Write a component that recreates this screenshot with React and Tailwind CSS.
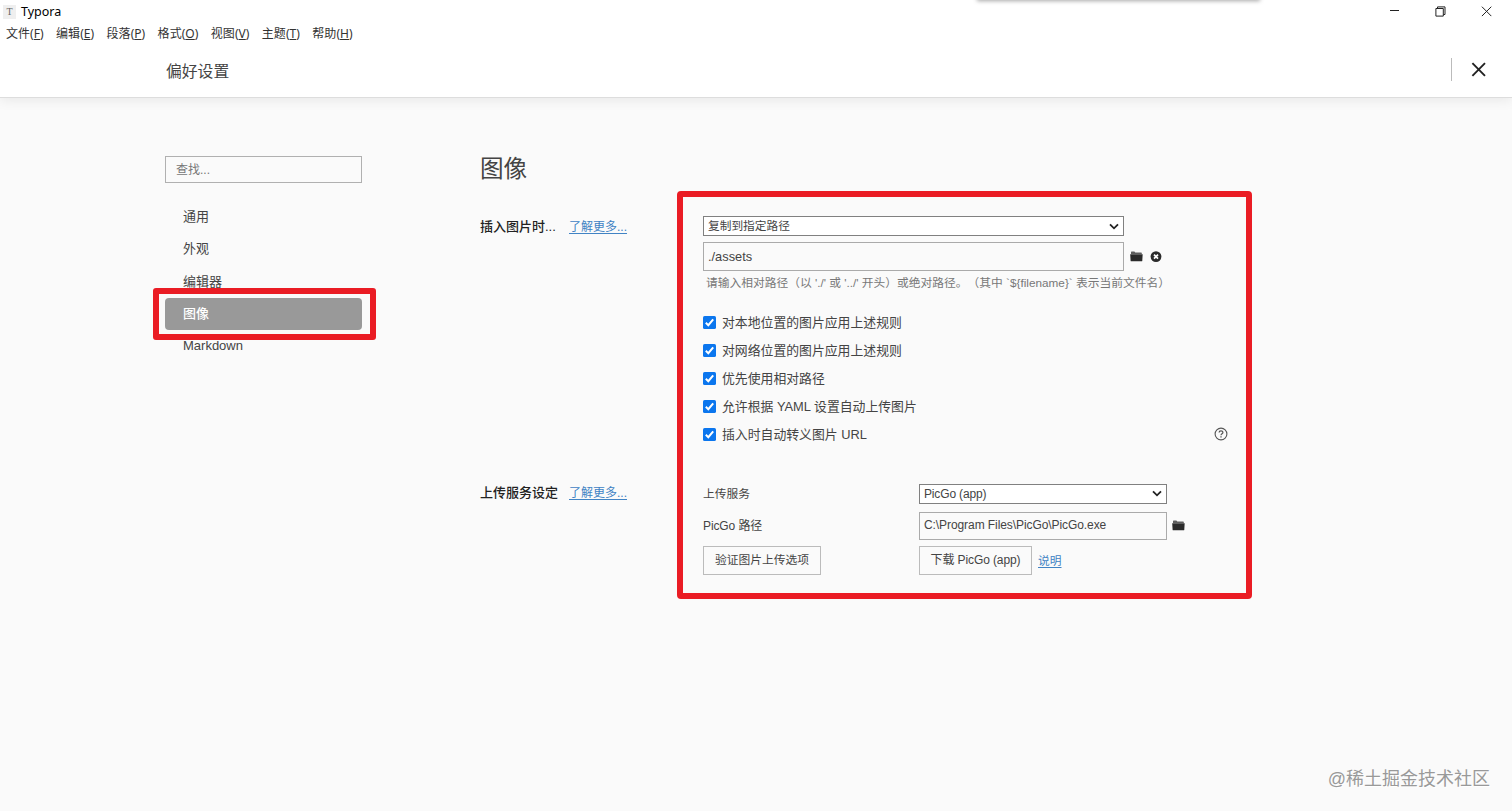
const menus = [
  { label: "文件", key: "F" },
  { label: "编辑", key: "E" },
  { label: "段落", key: "P" },
  { label: "格式", key: "O" },
  { label: "视图", key: "V" },
  { label: "主题", key: "T" },
  { label: "帮助", key: "H" },
];

const sections = ["通用", "外观", "编辑器", "图像", "Markdown"];

const rules = [
  "对本地位置的图片应用上述规则",
  "对网络位置的图片应用上述规则",
  "优先使用相对路径",
  "允许根据 YAML 设置自动上传图片",
  "插入时自动转义图片 URL",
];

function FolderIcon() {
  return (
    <svg width="13" height="11" viewBox="0 0 13 11" fill="#2b2b2b">
      <path d="M1 3V1.2Q1 .6 1.6.6H4.4L5.3 1.5H11.2Q11.8 1.5 11.8 2.1V3Z" opacity=".75" />
      <path d="M.2 3.3H12.7L12.3 9.7Q12.2 10.3 11.6 10.3H1.3Q.7 10.3.6 9.7Z" />
    </svg>
  );
}

function ClearIcon() {
  return (
    <svg width="12" height="12" viewBox="0 0 12 12">
      <circle cx="6" cy="5.6" r="5.4" fill="#2b2b2b" />
      <path d="M4 3.6L8 7.6M8 3.6L4 7.6" stroke="#fff" strokeWidth="1.7" />
    </svg>
  );
}

function Chevron() {
  return (
    <svg width="10" height="7" viewBox="0 0 10 7" fill="none" stroke="#222" strokeWidth="1.8">
      <path d="M1 1.3L5 5.3L9 1.3" />
    </svg>
  );
}

function Checkbox() {
  return (
    <svg width="13" height="13" viewBox="0 0 13 13" className="shrink-0">
      <rect width="13" height="13" rx="1.6" fill="#0b76ee" />
      <path d="M2.8 6.8L5.3 9.2L10.2 3.3" fill="none" stroke="#fff" strokeWidth="2" />
    </svg>
  );
}

function HelpIcon() {
  return (
    <svg width="14" height="14" viewBox="0 0 14 14" fill="none" stroke="#555" className="mb-[2px]">
      <circle cx="7" cy="7" r="5.9" strokeWidth="1.1" />
      <path d="M5.1 5.6C5.1 3.2 8.9 3.2 8.9 5.5C8.9 6.8 7 6.8 7 8.3" strokeWidth="1.2" />
      <path d="M7 9.3V10.5" strokeWidth="1.3" />
    </svg>
  );
}

function Select({ value, className }) {
  return (
    <div className={`flex items-center justify-between border border-[#808080] bg-white pr-1 pl-1 ${className}`}>
      <span>{value}</span>
      <Chevron />
    </div>
  );
}

function TitleBar() {
  return (
    <div className="relative flex h-[23px] items-center justify-between">
      <div className="flex items-center">
        <span className="ml-[3px] flex h-[14px] w-[13px] items-center justify-center bg-[#efefef] font-['Liberation_Serif',serif] text-[10px] text-[#666]">
          T
        </span>
        <span className="ml-[5px] font-['Noto_Sans',sans-serif] text-[12.5px] leading-[22px] text-black">Typora</span>
      </div>
      <div className="absolute top-[-6px] left-[978px] h-[6px] w-[281px] shadow-[0_0_4px_1px_rgba(0,0,0,0.35)]"></div>
      <div className="mr-[20px] flex items-center gap-[35px]">
        <svg width="11" height="11" viewBox="0 0 11 11" stroke="#222">
          <path d="M1 4.5H10" />
        </svg>
        <svg width="11" height="11" viewBox="0 0 11 11" fill="none" stroke="#222">
          <path d="M.9 2.5H8.3V10.1H.9ZM2.5 2.5V.9H10V8.5H8.5" />
        </svg>
        <svg width="11" height="11" viewBox="0 0 11 11" stroke="#222">
          <path d="M.9.7L10.3 10.1M10.3.7L.9 10.1" />
        </svg>
      </div>
    </div>
  );
}

function MenuBar() {
  return (
    <div className="flex h-[22px] items-center gap-[12.4px] pl-[6px] font-['Noto_Sans','Noto_Sans_CJK_SC',sans-serif] text-[12px] leading-[22px] tracking-[0.04px] text-[#333]">
      {menus.map((m) => (
        <span key={m.key}>
          {m.label}(<u className="underline-offset-1">{m.key}</u>)
        </span>
      ))}
    </div>
  );
}

function Header() {
  return (
    <div className="flex h-[52px] justify-between">
      <h1 className="mt-[16px] ml-[166px] text-[15.8px] leading-[22px] text-[#444]">偏好设置</h1>
      <div className="mt-[13px] mr-[26px] flex h-[23px] items-center gap-[19px]">
        <div className="h-[23px] w-px bg-[#bbb]"></div>
        <svg width="15" height="15" viewBox="0 0 15 15" stroke="#222" strokeWidth="1.9">
          <path d="M1.4 1.2L14 13.8M14 1.2L1.4 13.8" />
        </svg>
      </div>
    </div>
  );
}

function Sidebar() {
  return (
    <div className="w-[197px] shrink-0 pt-[58px]">
      <div className="h-[27px] border border-[#b0b0b0] pl-[10px] text-[12px] leading-[27px] text-[#777]">查找...</div>
      <div className="mt-[18px]">
        {sections.map((name) =>
          name === "图像" ? (
            <div key={name} className="relative h-[32px] rounded-[4px] bg-[#999] pl-[18px] leading-[32px] font-medium text-white">
              {name}
              <div className="absolute -top-[10px] -right-[14px] -bottom-[10px] -left-[12px] rounded-[3px] border-[6px] border-[#ea1c24]"></div>
            </div>
          ) : (
            <div key={name} className="h-[32.3px] pl-[18px] leading-[32px]">
              {name}
            </div>
          )
        )}
      </div>
    </div>
  );
}

function SectionLabel({ children }) {
  return (
    <div className="flex h-[20px] items-center whitespace-nowrap">
      <span className="w-[89px] font-medium text-[#222]">{children}</span>
      <a className="text-[12px] text-[#4183c4] underline underline-offset-2">了解更多...</a>
    </div>
  );
}

function ImagePanel() {
  return (
    <div className="mt-[93px] h-[408px] w-[575px] shrink-0 rounded-[4px] border-[6px] border-[#ea1c24] pt-[19px] pl-[20px]">
      <Select value="复制到指定路径" className="h-[20px] w-[421px] text-[11.7px] leading-[18px]" />
      <div className="mt-[6px] flex items-center">
        <div className="h-[29px] w-[421px] border border-[#aaa] pl-1 text-[12.8px] leading-[27px]">./assets</div>
        <div className="ml-[6px] flex items-center gap-[7px]">
          <FolderIcon />
          <ClearIcon />
        </div>
      </div>
      <div className="h-[24px] pl-[3px] text-[11.75px] leading-[24px] whitespace-nowrap text-[#777] [text-spacing-trim:space-all]">
        {"请输入相对路径（以 './' 或 '../' 开头）或绝对路径。（其中 `${filename}` 表示当前文件名）"}
      </div>

      <div className="mt-[13px]">
        {rules.map((rule, i) => (
          <div key={rule} className="flex h-[28.2px] items-center justify-between pr-[18px]">
            <div className="flex items-center gap-[6px]">
              <Checkbox />
              <span className="pt-px text-[12.85px] leading-[28px]">{rule}</span>
            </div>
            {i === rules.length - 1 && <HelpIcon />}
          </div>
        ))}
      </div>

      <div className="mt-[35px] grid grid-cols-[216px_1fr] text-[11.75px]">
        <span className="leading-[20px]">上传服务</span>
        <Select value="PicGo (app)" className="h-[20px] w-[248px] text-[12px] leading-[16px] tracking-[-0.15px]" />
        <span className="mt-[8px] text-[12px] leading-[28px] tracking-[-0.1px]">PicGo 路径</span>
        <div className="mt-[8px] flex items-center">
          <div className="h-[28px] w-[248px] border border-[#aaa] pl-1 text-[12px] leading-[25px] tracking-[-0.08px]">
            C:\Program Files\PicGo\PicGo.exe
          </div>
          <span className="ml-[5px]">
            <FolderIcon />
          </span>
        </div>
        <button className="mt-[6px] h-[29px] w-[118px] border border-[#bbb] leading-[26px]">验证图片上传选项</button>
        <div className="mt-[6px] flex items-center">
          <button className="h-[29px] w-[113px] border border-[#bbb] text-[12px] leading-[26px] tracking-[-0.1px]">
            下载 PicGo (app)
          </button>
          <a className="ml-[6px] text-[#4183c4] underline underline-offset-2">说明</a>
        </div>
      </div>
    </div>
  );
}

export default function App() {
  return (
    <div className="relative flex h-[811px] w-[1512px] flex-col overflow-hidden bg-[#fafafa] font-['Liberation_Sans','Noto_Sans_CJK_SC',sans-serif] text-[13px] text-[#444]">
      <div className="h-[98px] border-b border-[#ddd] bg-white shadow-[0_2px_12px_rgba(0,0,0,0.08)]">
        <TitleBar />
        <MenuBar />
        <Header />
      </div>

      <div className="flex pl-[165px]">
        <Sidebar />
        <div className="ml-[118px] w-[197px] shrink-0">
          <h2 className="mt-[57px] h-[30px] text-[23.6px] leading-[29px]">图像</h2>
          <div className="mt-[32px]">
            <SectionLabel>插入图片时...</SectionLabel>
          </div>
          <div className="mt-[246px]">
            <SectionLabel>上传服务设定</SectionLabel>
          </div>
        </div>
        <ImagePanel />
      </div>

      <div className="absolute right-[22px] bottom-[19px] text-[18px] leading-[26px] text-[#999] [text-shadow:1px_1px_0_#fff]">
        @稀土掘金技术社区
      </div>
    </div>
  );
}
